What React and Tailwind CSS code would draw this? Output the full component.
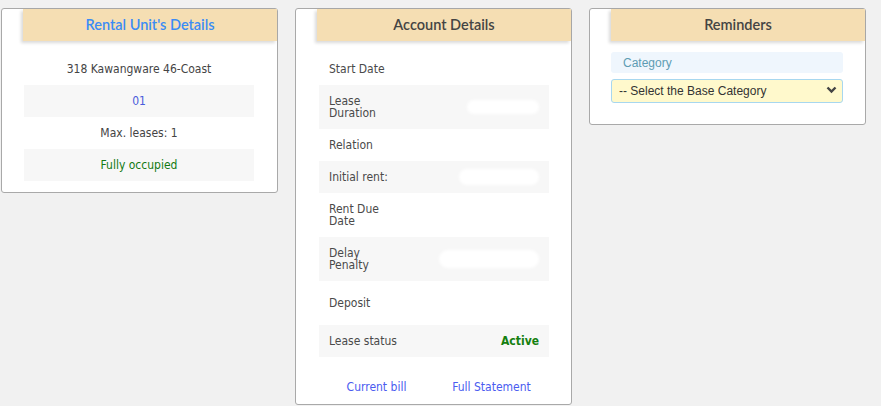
import React from "react";

const body = { fontFamily: "'DejaVu Sans Condensed', 'DejaVu Sans', sans-serif" };
const title = { fontFamily: "Lato, 'Liberation Sans', sans-serif" };
const arial = { fontFamily: "'Liberation Sans', Arial, sans-serif" };

function Header({ children, color }) {
  return (
    <div
      className="ml-[21px] h-[32px] flex items-center justify-center bg-[#f5deb3] shadow-[-2px_2px_3px_rgba(0,0,0,0.15)] text-[14.5px] font-semibold"
      style={{ ...title, color }}
    >
      {children}
    </div>
  );
}

function Blob({ w, h }) {
  return <div className="bg-white rounded-full blur-[1.5px]" style={{ width: w, height: h }} />;
}

function Row({ label, shaded, children, tall }) {
  return (
    <div
      className={`flex items-center px-[10px] ${tall ? "h-[44px]" : "h-[32px]"} ${shaded ? "bg-[#f7f7f7]" : ""}`}
    >
      <div className="w-[70px] text-[12px] leading-[12px] text-[#4a4a4a]">{label}</div>
      <div className="flex-1 flex items-center justify-end">{children}</div>
    </div>
  );
}

export default function App() {
  return (
    <div className="min-h-[406px] bg-[#f1f1f1] pl-px pt-[8px] flex items-start gap-[17px]" style={body}>
      {/* Card 1 */}
      <div className="w-[277px] bg-white border border-[#a9a9a9] rounded-[3px]">
        <Header color="#3b8cf5">Rental Unit's Details</Header>
        <div className="ml-[22px] w-[230px] mt-[12px] mb-[11px] text-[12px] text-center">
          <div className="h-[32px] flex items-center justify-center text-[#444]">318 Kawangware 46-Coast</div>
          <div className="h-[32px] flex items-center justify-center bg-[#f7f7f7] text-[#4a5cdb]">01</div>
          <div className="h-[32px] flex items-center justify-center text-[#444]">Max. leases: 1</div>
          <div className="h-[32px] flex items-center justify-center bg-[#f7f7f7] text-[#127a12]">Fully occupied</div>
        </div>
      </div>

      {/* Card 2 */}
      <div className="w-[277px] bg-white border border-[#a9a9a9] rounded-[3px]">
        <Header color="#444">Account Details</Header>
        <div className="ml-[23px] w-[230px] mt-[12px]">
          <Row label="Start Date"></Row>
          <Row label="Lease Duration" shaded tall>
            <Blob w={72} h={14} />
          </Row>
          <Row label="Relation"></Row>
          <Row label="Initial rent:" shaded>
            <Blob w={80} h={16} />
          </Row>
          <Row label="Rent Due Date" tall></Row>
          <Row label="Delay Penalty" shaded tall>
            <Blob w={100} h={18} />
          </Row>
          <Row label="Deposit" tall></Row>
          <Row label="Lease status" shaded>
            <span className="text-[12px] font-bold text-[#15800f]">Active</span>
          </Row>
        </div>
        <div className="ml-[23px] w-[230px] mt-[21px] mb-[8px] h-[18px] grid grid-cols-2 text-[12px] text-[#4a5cf0]">
          <div className="flex items-center justify-center">Current bill</div>
          <div className="flex items-center justify-center">Full Statement</div>
        </div>
      </div>

      {/* Card 3 */}
      <div className="w-[277px] bg-white border border-[#a9a9a9] rounded-[3px]">
        <Header color="#444">Reminders</Header>
        <div className="ml-[21px] w-[232px] mt-[11px] mb-[22px]" style={arial}>
          <div className="h-[21px] rounded-[3px] bg-[#eff6fd] flex items-center pl-[12px] text-[12px] text-[#5e9cb3]">
            Category
          </div>
          <div className="relative mt-[5px] h-[24px]">
            <select
              className="appearance-none w-full h-full rounded-[3px] border border-[#a7d7ef] bg-[#fff9cc] pl-[7px] text-[12px] text-[#333] outline-none"
              style={arial}
              defaultValue=""
            >
              <option value="">-- Select the Base Category</option>
            </select>
            <svg
              className="absolute right-[6px] top-[8px] pointer-events-none"
              width="11"
              height="8"
              viewBox="0 0 11 8"
            >
              <path d="M1.5 1.5 L5.5 5.5 L9.5 1.5" fill="none" stroke="#444" strokeWidth="2.4" />
            </svg>
          </div>
        </div>
      </div>
    </div>
  );
}
